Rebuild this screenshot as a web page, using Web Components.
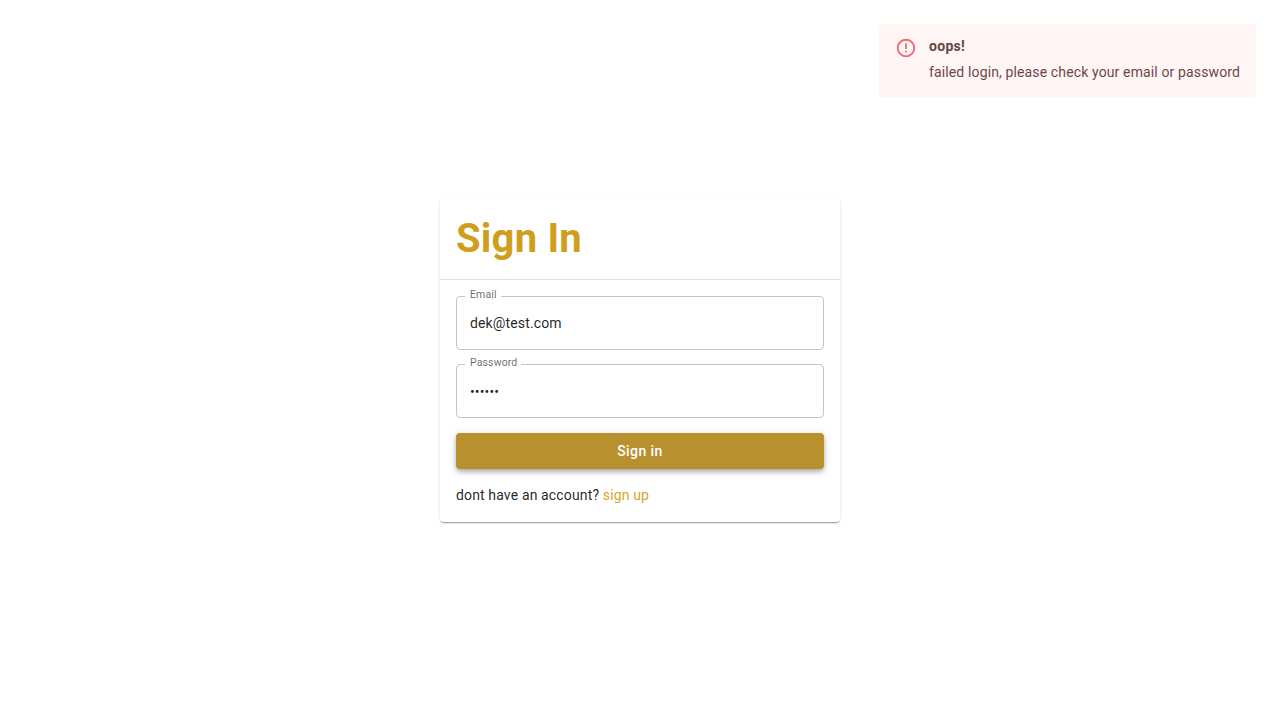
<!DOCTYPE html>
<html lang="en"><head><meta charset="utf-8"><title>Sign In</title>
<style>
html,body{margin:0;height:100%}
body{background:#fff;color:rgba(0,0,0,.87);font:400 14px/20.02px Roboto,sans-serif;letter-spacing:.14px;overflow:hidden}
</style></head><body>
<login-page></login-page>
<script>
const define=(name,html)=>customElements.define(name,class extends HTMLElement{
  constructor(){super();this.attachShadow({mode:'open'}).innerHTML=html;}
});
define('toast-alert',`<style>
:host{display:flex;box-sizing:border-box;width:377px;height:73px;padding:6px 16px;background:#fff5f4;color:#6c484a;border-radius:4px;letter-spacing:.13px}
svg{width:22px;height:22px;margin:7px 12px 0 0;flex:none;fill:#ef6a73}
.body{padding-top:6px;white-space:nowrap}
.title{font-weight:700;line-height:20px;margin-bottom:6px;letter-spacing:.3px;color:#634643}
</style><svg viewBox="0 0 24 24"><path d="M11 15h2v2h-2zm0-8h2v6h-2zm.99-5C6.47 2 2 6.48 2 12s4.47 10 9.99 10C17.52 22 22 17.52 22 12S17.52 2 11.99 2zM12 20c-4.42 0-8-3.58-8-8s3.58-8 8-8 8 3.58 8 8-3.58 8-8 8z"/></svg>
<div class="body"><div class="title"><slot name="title"></slot></div><slot></slot></div>`);
define('sign-card',`<style>
:host{display:flex;flex-direction:column;box-sizing:border-box;width:400px;height:324px;border-radius:4px;background:#fff;box-shadow:0 2px 1px -1px rgba(0,0,0,.2),0 1px 1px rgba(0,0,0,.14),0 1px 3px rgba(0,0,0,.12)}
header{box-sizing:border-box;height:82px;padding:17px 16px 15px;border-bottom:1px solid #e0e0e0;color:#d09e1d;font-size:40px;line-height:48px;font-weight:700;letter-spacing:.2px}
.content{display:flex;flex-direction:column;gap:14.7px;padding:16px}
</style><header><slot name="heading"></slot></header><div class="content"><slot></slot></div>`);
define('outlined-field',`<style>
:host{display:block;height:53.7px}
fieldset{box-sizing:border-box;height:60.7px;margin:-7px 0 0;padding:0 8px;border:1px solid #c4c4c4;border-radius:4px;min-width:0}
legend{height:15px;padding:0 4px 0 5px;color:rgba(0,0,0,.6);font-size:10.5px;line-height:11px;letter-spacing:.13px}
.value{padding:9.2px 5px 0;line-height:20px}
</style><fieldset><legend><slot name="label"></slot></legend><div class="value"><slot></slot></div></fieldset>`);
define('primary-button',`<style>
:host{display:block}
button{display:block;width:100%;height:36px;padding:1px 6px;border:0;border-radius:4px;background:#b8902d;color:#fff;font:500 14px/24px Roboto,sans-serif;letter-spacing:.43px;box-shadow:0 2px 4px -1px rgba(0,0,0,.2),0 4px 5px rgba(0,0,0,.14),0 1px 10px rgba(0,0,0,.12)}
</style><button><slot></slot></button>`);
define('account-prompt',`<style>
:host{display:block;margin-top:1.3px;line-height:20px}a{color:#d4a72c;text-decoration:none}
</style><slot></slot> <a href="#"><slot name="link"></slot></a>`);
define('login-page',`<style>
:host{display:grid;place-items:center;width:100%;height:100vh}
toast-alert{position:absolute;top:24px;right:24px}
</style><toast-alert><span slot="title">oops!</span>failed login, please check your email or password</toast-alert>
<sign-card><span slot="heading">Sign In</span>
<outlined-field><span slot="label">Email</span>dek@test.com</outlined-field>
<outlined-field><span slot="label">Password</span>••••••</outlined-field>
<primary-button>Sign in</primary-button>
<account-prompt>dont have an account?<span slot="link">sign up</span></account-prompt></sign-card>`);
</script></body></html>
